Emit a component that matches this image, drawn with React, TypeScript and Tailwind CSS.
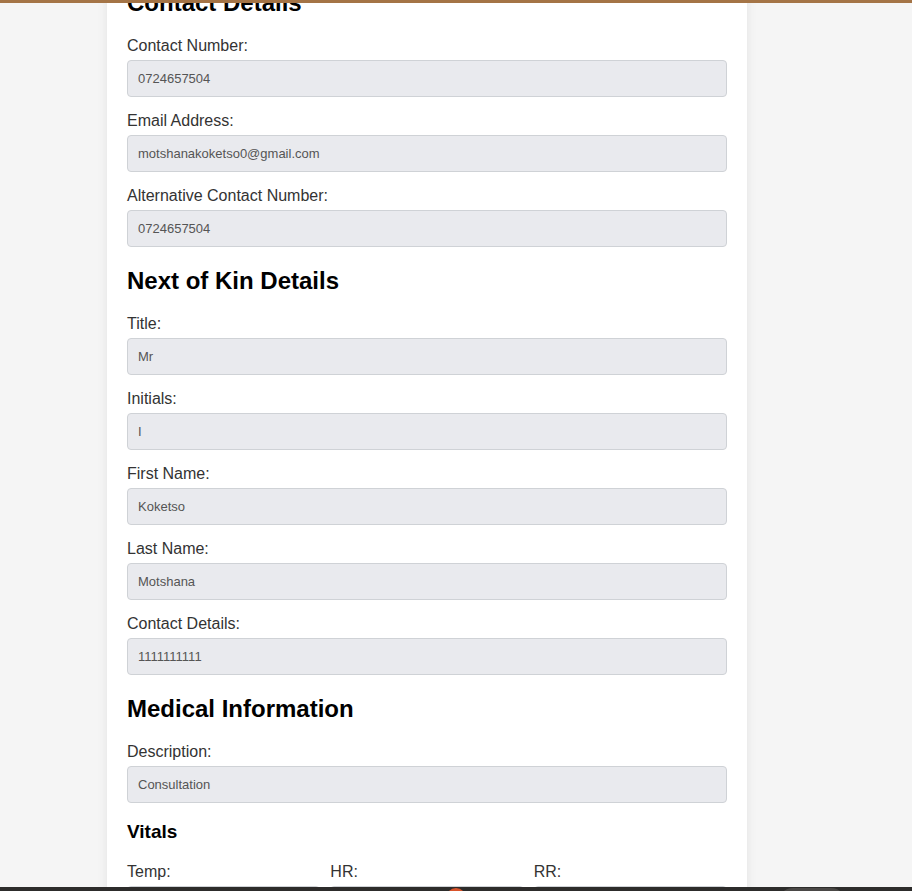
import React from 'react';

type Field = { label: string; value: string };

const contactFields: Field[] = [
  { label: 'Contact Number:', value: '0724657504' },
  { label: 'Email Address:', value: 'motshanakoketso0@gmail.com' },
  { label: 'Alternative Contact Number:', value: '0724657504' },
];

const kinFields: Field[] = [
  { label: 'Title:', value: 'Mr' },
  { label: 'Initials:', value: 'I' },
  { label: 'First Name:', value: 'Koketso' },
  { label: 'Last Name:', value: 'Motshana' },
  { label: 'Contact Details:', value: '1111111111' },
];

const FormField: React.FC<{ field: Field }> = ({ field }) => (
  <div className="mb-[15px]">
    <label className="block text-[16px] leading-[18px] text-[#333] mb-[5px]">{field.label}</label>
    <input
      disabled
      value={field.value}
      readOnly
      className="block w-full h-[37px] px-[10px] text-[13px] text-[#555] bg-[#e9eaee] border border-[#cfd2d6] rounded-[4px]"
    />
  </div>
);

const SectionTitle: React.FC<{ children: React.ReactNode }> = ({ children }) => (
  <h2 className="text-[24px] leading-[28px] font-bold text-black mt-[20px] mb-[20px]">{children}</h2>
);

const App: React.FC = () => {
  return (
    <div className="min-h-screen bg-[#f5f5f5]" style={{ fontFamily: '"Liberation Sans", Arial, sans-serif' }}>
      <div className="fixed top-0 left-0 right-0 h-[3px] bg-[#a47446] z-10" />

      <div className="w-[640px] ml-[107px] -mt-[31px] bg-white shadow-[0_0_10px_rgba(0,0,0,0.08)] px-[20px] pt-[20px] pb-[40px]">
        <h2 className="text-[24px] leading-[28px] font-bold text-black mb-[20px]">Contact Details</h2>
        {contactFields.map((f) => (
          <FormField key={f.label} field={f} />
        ))}

        <SectionTitle>Next of Kin Details</SectionTitle>
        {kinFields.map((f) => (
          <FormField key={f.label} field={f} />
        ))}

        <SectionTitle>Medical Information</SectionTitle>
        <FormField field={{ label: 'Description:', value: 'Consultation' }} />

        <h3 className="text-[19px] leading-[22px] font-bold text-black mt-[18px] mb-[20px]">Vitals</h3>
        <div className="grid grid-cols-3 gap-[10px]">
          {['Temp:', 'HR:', 'RR:'].map((l) => (
            <div key={l}>
              <label className="block text-[16px] leading-[18px] text-[#333] mb-[5px]">{l}</label>
              <input
                className="block w-full h-[37px] px-[10px] text-[13px] text-[#555] bg-white border border-[#cfd2d6] rounded-[4px]"
                readOnly
              />
            </div>
          ))}
        </div>
      </div>

      <div className="fixed left-0 right-0 top-[887px] h-[60px] bg-[#2d2c2b] z-10">
        <div className="absolute left-[446px] top-[1px] w-[20px] h-[20px] rounded-full bg-[#d9542b]" />
        <div className="absolute left-[778px] top-[1px] w-[68px] h-[30px] rounded-full bg-[#4a4846]" />
      </div>
    </div>
  );
};

export default App;
